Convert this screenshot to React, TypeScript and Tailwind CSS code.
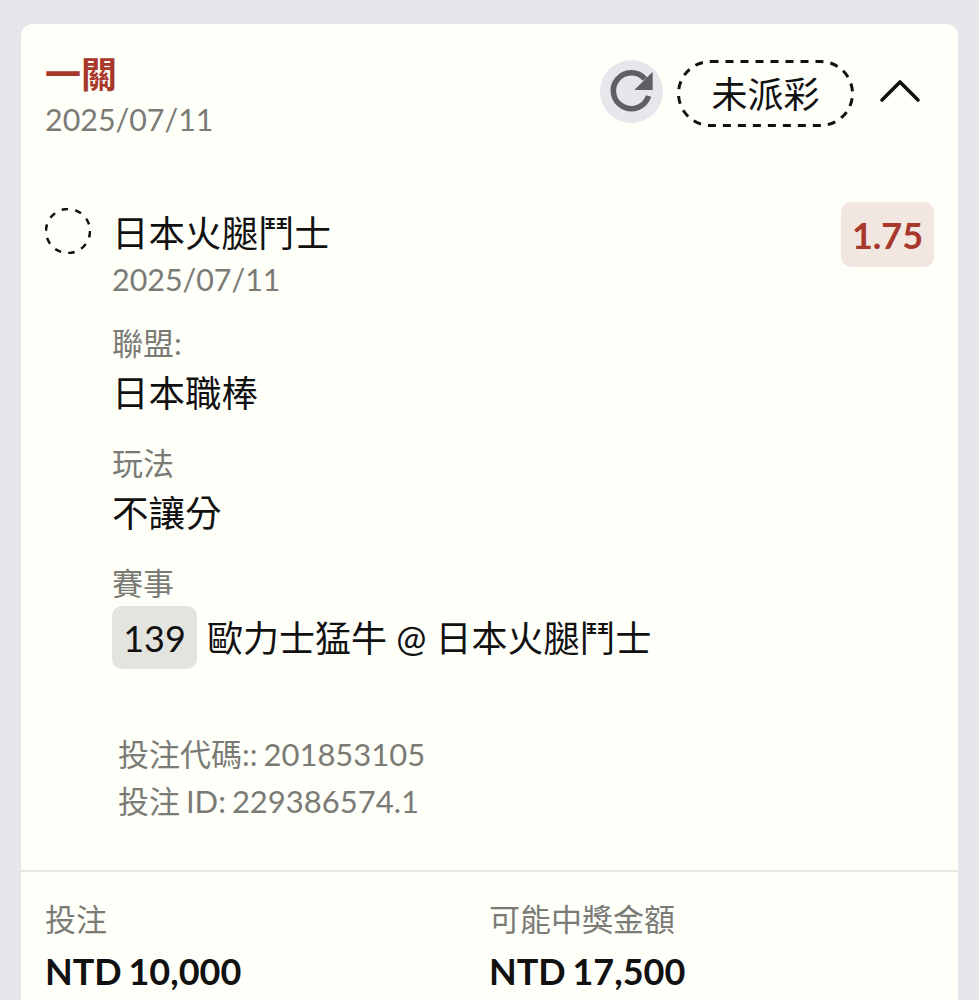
import { ChevronUp } from 'lucide-react';

const font = { fontFamily: 'Lato, "Noto Sans CJK TC", sans-serif' };

function Field({ label, value }: { label: string; value: string }) {
    return (
        <div className="mb-[20px]">
            <div className="text-[31px] leading-[46px] text-[#7b7b76]">{label}</div>
            <div className="text-[36.5px] leading-[54px] text-[#111]">{value}</div>
        </div>
    );
}

export default function App() {
    return (
        <div className="flex h-[1000px] flex-col overflow-hidden bg-[#e5e7eb] px-[21px] pt-[24px]" style={font}>
            <div className="flex-1 rounded-t-[12px] bg-[#fffffa]">
                {/* header */}
                <div className="flex items-start justify-between pl-[24px] pr-[22px] pt-[27px]">
                    <div>
                        <div className="text-[36px] font-bold leading-[46px] text-[#a8372c]">一關</div>
                        <div className="text-[30.4px] leading-[44px] text-[#7b7b76]">2025/07/11</div>
                    </div>
                    <div className="mt-[9px] flex items-start">
                        <div className="h-[63px] w-[63px] rounded-full bg-[#e5e7eb]">
                            <svg viewBox="0 0 63 63" className="h-[63px] w-[63px]">
                                <path d="M45 19A18 18 0 1 0 48.5 36" fill="none" stroke="#5f6065" strokeWidth="5.6" />
                                <path d="M52.7 11.7V30H34.3Z" fill="#5f6065" />
                            </svg>
                        </div>
                        <div className="relative ml-[14px] flex h-[67px] w-[177px] items-center justify-center text-[36px] text-[#111]">
                            <svg viewBox="0 0 177 67" className="absolute inset-0 h-[67px] w-[177px]" fill="none">
                                <rect x="1.5" y="1.5" width="174" height="64" rx="32" stroke="#111" strokeWidth="3" strokeDasharray="8 7" />
                            </svg>
                            未派彩
                        </div>
                        <ChevronUp className="ml-[10px] -mt-[5.5px] h-[72px] w-[72px] text-[#111]" strokeWidth={1.2} />
                    </div>
                </div>

                {/* selection */}
                <div className="relative mt-[51px] pl-[91px] pr-[24px]">
                    <svg viewBox="0 0 46 46" className="absolute left-[24px] top-[16px] h-[46px] w-[46px]" fill="none">
                        <circle cx="23" cy="23" r="22" stroke="#111" strokeWidth="2.5" strokeDasharray="6.5 7.3" />
                    </svg>
                    <div className="absolute right-[24px] top-[10px] flex h-[65px] w-[93px] items-center justify-center rounded-[10px] bg-[#f1e6e0] text-[36px] font-bold text-[#a8372c]">
                        1.75
                    </div>
                    <div className="pt-[14px] text-[36.5px] leading-[54px] text-[#111]">日本火腿鬥士</div>
                    <div className="mb-[22px] text-[30.4px] leading-[38px] text-[#7b7b76]">2025/07/11</div>
                    <Field label="聯盟:" value="日本職棒" />
                    <Field label="玩法" value="不讓分" />
                    <div className="text-[31px] leading-[46px] text-[#7b7b76]">賽事</div>
                    <div className="flex items-center text-[36px] text-[#111]">
                        <span className="flex h-[63px] w-[85px] items-center justify-center rounded-[10px] bg-[#e4e4df]">139</span>
                        <span className="ml-[10px]">歐力士猛牛 @ 日本火腿鬥士</span>
                    </div>
                    <div className="mt-[62px] pl-[6px] text-[31px] leading-[47px] text-[#7b7b76] [word-spacing:-2px]">
                        <div>投注代碼:: 201853105</div>
                        <div>投注 ID: 229386574.1</div>
                    </div>
                </div>

                {/* totals */}
                <div className="mt-[45px] flex border-t-2 border-[#e6e6e2] pl-[24px] pt-[24px]">
                    <div className="w-[444px]">
                        <div className="text-[31px] leading-[46px] text-[#7b7b76]">投注</div>
                        <div className="text-[36px] font-bold leading-[58px] text-[#111] [word-spacing:-2px]">NTD 10,000</div>
                    </div>
                    <div>
                        <div className="text-[31px] leading-[46px] text-[#7b7b76]">可能中獎金額</div>
                        <div className="text-[36px] font-bold leading-[58px] text-[#111] [word-spacing:-2px]">NTD 17,500</div>
                    </div>
                </div>
            </div>
        </div>
    );
}
